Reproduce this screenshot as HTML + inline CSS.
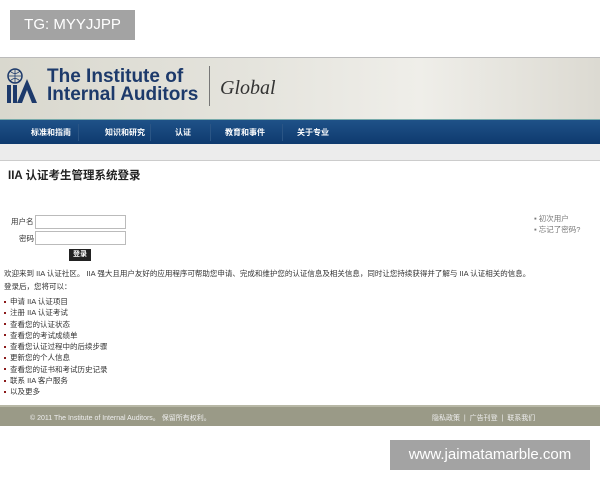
<!DOCTYPE html><html><head><meta charset="utf-8"><style>
body{margin:0;width:600px;height:480px;background:#fff;position:relative;overflow:hidden;font-family:"Liberation Sans","Noto Sans CJK SC",sans-serif}
.a{position:absolute}
.wm{background:#a3a3a3;color:#fff;font-size:15px;line-height:30px;text-align:center}
.nav span{position:absolute;top:7px;font-size:8px;color:#fff;font-weight:bold}
.sep{position:absolute;top:4px;width:1px;height:17px;background:#2a5585}
.t{font-size:7.5px;color:#333;white-space:nowrap}
ul{margin:0;padding:0;list-style:none}
li{font-size:7.5px;color:#333;height:11.3px;line-height:11.3px}
li:before{content:"";display:inline-block;width:2px;height:2px;background:#8b1a1a;margin:0 4px 1px 1px;vertical-align:middle}
</style></head><body>
<div class="a wm" style="left:10px;top:10px;width:125px;height:30px">TG: MYYJJPP</div>
<div class="a" style="left:0;top:57px;width:600px;height:62px;background:linear-gradient(90deg,#d9d8ce,#e4e3dc 40%,#efeee9 70%,#dcdad2);border-top:1px solid #bbb"></div>
<svg class="a" style="left:5px;top:65px" width="42" height="42" viewBox="0 0 42 42"><circle cx="10" cy="11" r="7" fill="none" stroke="#1d3a6b" stroke-width="1.5"/><path d="M3 11h14M10 4v14M5 6q5 5 10 0M5 16q5-5 10 0" stroke="#1d3a6b" fill="none" stroke-width="0.8"/><rect x="2" y="20" width="4" height="18" fill="#1d3a6b"/><rect x="8" y="20" width="4" height="18" fill="#1d3a6b"/><path d="M12 38L22 14L32 38h-5l-5-13-5 13z" fill="#1d3a6b"/></svg>
<div class="a" style="left:47px;top:68px;font-size:19px;font-weight:bold;color:#1d3a6b;line-height:18px">The Institute of<br>Internal Auditors</div>
<div class="a" style="left:209px;top:66px;width:1px;height:40px;background:#777"></div>
<div class="a" style="left:220px;top:77px;font-family:'Liberation Serif',serif;font-style:italic;font-size:20px;color:#333">Global</div>
<div class="a nav" style="left:0;top:119px;width:600px;height:24px;background:linear-gradient(#1f5288,#0e3a6e);border-top:1px solid #7aa">
<span style="left:31px">标准和指南</span><div class="sep" style="left:78px"></div>
<span style="left:105px">知识和研究</span><div class="sep" style="left:150px"></div>
<span style="left:175px">认证</span><div class="sep" style="left:210px"></div>
<span style="left:225px">教育和事件</span><div class="sep" style="left:282px"></div>
<span style="left:297px">关于专业</span></div>
<div class="a" style="left:0;top:144px;width:600px;height:16px;background:#ececec;border-bottom:1px solid #ccc"></div>
<div class="a" style="left:8px;top:167px;font-size:11.5px;font-weight:bold;color:#222">IIA 认证考生管理系统登录</div>
<div class="a t" style="left:11px;top:216px">用户名</div>
<div class="a t" style="left:19px;top:233px">密码</div>
<div class="a" style="left:35px;top:215px;width:89px;height:12px;border:1px solid #bbb"></div>
<div class="a" style="left:35px;top:231px;width:89px;height:12px;border:1px solid #bbb"></div>
<div class="a" style="left:69px;top:249px;width:22px;height:12px;background:#222;color:#fff;font-size:7px;text-align:center;line-height:12px;font-weight:bold">登录</div>
<div class="a t" style="left:534px;top:213px;color:#777">▪ 初次用户<br>▪ 忘记了密码?</div>
<div class="a t" style="left:4px;top:268px">欢迎来到 IIA 认证社区。 IIA 强大且用户友好的应用程序可帮助您申请、完成和维护您的认证信息及相关信息，同时让您持续获得并了解与 IIA 认证相关的信息。</div>
<div class="a t" style="left:4px;top:281px">登录后，您将可以：</div>
<ul class="a" style="left:3px;top:296px">
<li>申请 IIA 认证项目</li><li>注册 IIA 认证考试</li><li>查看您的认证状态</li><li>查看您的考试成绩单</li><li>查看您认证过程中的后续步骤</li><li>更新您的个人信息</li><li>查看您的证书和考试历史记录</li><li>联系 IIA 客户服务</li><li>以及更多</li></ul>
<div class="a" style="left:0;top:405px;width:600px;height:19px;background:#9a9a87;border-top:2px solid #b8b8a6"></div>
<div class="a t" style="left:30px;top:413px;color:#eee;font-size:7px">© 2011 The Institute of Internal Auditors。 保留所有权利。</div>
<div class="a t" style="left:432px;top:413px;color:#eee;font-size:7px">隐私政策 &nbsp;| &nbsp;广告刊登 &nbsp;| &nbsp;联系我们</div>
<div class="a wm" style="left:390px;top:440px;width:200px;height:30px">www.jaimatamarble.com</div>
</body></html>
